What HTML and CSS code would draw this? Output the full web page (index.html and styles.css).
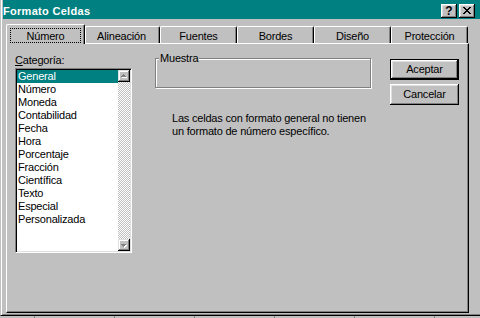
FILE: index.html
```html
<html>
	<head>
		<title>Formato Celdas</title>
		<link rel="stylesheet" href="styles.css">
	</head>

	<body>
		<div class="window">
			<div class="titlebar">
				<span class="title">Formato Celdas</span>
				<div class="caption_btns">
					<span class="cbtn help">?</span>
					<span class="cbtn close">
						<svg width="8" height="7" viewBox="0 0 8 7" shape-rendering="crispEdges">
							<path d="M0 0h2v1H0zM6 0h2v1H6zM1 1h2v1H1zM5 1h2v1H5zM2 2h4v1H2zM3 3h2v1H3zM2 4h4v1H2zM1 5h2v1H1zM5 5h2v1H5zM0 6h2v1H0zM6 6h2v1H6z" fill="#000"/>
						</svg>
					</span>
				</div>
			</div>

			<div class="dialog">
				<div class="tabs">
					<div class="tab active"><span class="focus">Número</span></div>
					<div class="tab">Alineación</div>
					<div class="tab">Fuentes</div>
					<div class="tab">Bordes</div>
					<div class="tab">Diseño</div>
					<div class="tab">Protección</div>
				</div>

				<div class="panel">
					<div class="col_cat">
						<div class="lbl"><u>C</u>ategoría:</div>
						<div class="listbox">
							<ul class="items">
								<li class="sel">General</li>
								<li>Número</li>
								<li>Moneda</li>
								<li>Contabilidad</li>
								<li>Fecha</li>
								<li>Hora</li>
								<li>Porcentaje</li>
								<li>Fracción</li>
								<li>Científica</li>
								<li>Texto</li>
								<li>Especial</li>
								<li>Personalizada</li>
							</ul>
							<div class="vscroll">
								<div class="arrow">
									<svg width="12" height="12" viewBox="0 0 12 12" shape-rendering="crispEdges">
										<path d="M6 5h1v1H6zM5 6h3v1H5zM4 7h5v1H4z" fill="#fff"/>
										<path d="M5 4h1v1H5zM4 5h3v1H4zM3 6h5v1H3z" fill="#808080"/>
									</svg>
								</div>
								<div class="track"></div>
								<div class="arrow">
									<svg width="12" height="12" viewBox="0 0 12 12" shape-rendering="crispEdges">
										<path d="M4 6h5v1H4zM5 7h3v1H5zM6 8h1v1H6z" fill="#fff"/>
										<path d="M3 5h5v1H3zM4 6h3v1H4zM5 7h1v1H5z" fill="#808080"/>
									</svg>
								</div>
							</div>
						</div>
					</div>

					<div class="col_sample">
						<div class="group"><span class="group_lbl">Muestra</span></div>
						<p class="desc">Las celdas con formato general no tienen<br>un formato de número específico.</p>
					</div>

					<div class="col_btns">
						<div class="btn default">Aceptar</div>
						<div class="btn">Cancelar</div>
					</div>
				</div>
			</div>
		</div>
		<div class="sheet_edge"></div>
	</body>
</html>
```

FILE: styles.css
```css
body {
	margin: 0;
	background-color: #C0C0C0;
	font-family: "Liberation Sans", Arial, sans-serif;
	font-size: 11px;
	line-height: 13px;
	letter-spacing: -0.2px;
	color: #000;
}

.window {
	box-sizing: border-box;
	width: 480px;
	height: 316px;
	padding: 0 0 2px 2px;
	border-left: 1px solid #C0C0C0;
	border-bottom: 1px solid #000;
	box-shadow: inset 1px 0 #FFF, inset 0 -1px #808080;
	background-color: #C0C0C0;
	display: flex;
	flex-direction: column;
}

/* barra de titulo */
.titlebar {
	height: 19px;
	flex: 0 0 19px;
	background-color: #008080;
	color: #FFF;
	display: flex;
	justify-content: space-between;
	align-items: flex-start;
	padding-right: 5px;
}

.title {
	margin-top: 5px;
	font-weight: bold;
	letter-spacing: 0.3px;
}

.caption_btns {
	display: flex;
	gap: 2px;
	margin-top: 4px;
}

.cbtn {
	box-sizing: border-box;
	width: 16px;
	height: 14px;
	background-color: #C0C0C0;
	box-shadow: inset -1px -1px #000, inset 1px 1px #FFF, inset -2px -2px #808080, inset 2px 2px #DFDFDF;
	display: flex;
	justify-content: center;
	align-items: center;
	color: #000;
}

.help {
	font-weight: bold;
	font-size: 12px;
	letter-spacing: 0;
	line-height: 12px;
	padding-bottom: 1px;
}

.close svg {
	display: block;
	margin-bottom: 1px;
}

/* pestañas */
.dialog {
	padding: 5px 0 0 3px;
}

.tabs {
	display: flex;
	align-items: flex-end;
	height: 20px;
	margin-bottom: -1px;
	position: relative;
	z-index: 1;
}

.tab {
	box-sizing: border-box;
	width: 77px;
	height: 17px;
	margin-bottom: 1px;
	padding-top: 3px;
	text-align: center;
	border: 1px solid;
	border-bottom: 0;
	border-color: #FFF #000 #000 #FFF;
	border-radius: 2px 2px 0 0;
	box-shadow: inset -1px 0 #808080;
	background-color: #C0C0C0;
	white-space: nowrap;
}

.tab.active {
	width: 79px;
	height: 20px;
	margin-right: -2px;
	margin-bottom: 0;
	padding: 3px 3px 0 3px;
	position: relative;
	z-index: 1;
}

.tab.active + .tab {
	border-left-color: #C0C0C0;
	box-shadow: inset -1px 0 #808080, inset 2px 0 #FFF;
}

.focus {
	display: block;
	border: 1px dotted #000;
	padding-top: 1px;
	line-height: 12px;
}

.panel {
	box-sizing: border-box;
	width: 463px;
	height: 270px;
	padding: 8px 0 0 8px;
	border: 1px solid;
	border-color: #FFF #000 #000 #FFF;
	box-shadow: inset -1px -1px #808080;
	display: flex;
	align-items: flex-start;
}

/* lista de categorias */
.col_cat {
	width: 117px;
}

.lbl {
	margin-top: 2px;
}

.listbox {
	box-sizing: border-box;
	width: 117px;
	height: 185px;
	margin-top: 1px;
	padding: 1px;
	border: 1px solid;
	border-color: #808080 #FFF #FFF #808080;
	box-shadow: inset 1px 1px #000, inset -1px -1px #DFDFDF;
	background-color: #FFF;
	display: flex;
}

.items {
	flex: 1;
	list-style: none;
	margin: 0;
	padding: 0;
}

.items li {
	padding-left: 1px;
	white-space: nowrap;
}

.items li.sel {
	background-color: #008080;
	color: #FFF;
}

.vscroll {
	width: 12px;
	display: flex;
	flex-direction: column;
}

.arrow {
	box-sizing: border-box;
	height: 12px;
	background-color: #C0C0C0;
	box-shadow: inset -1px -1px #000, inset 1px 1px #DFDFDF, inset -2px -2px #808080, inset 2px 2px #FFF;
}

.arrow svg {
	display: block;
}

.track {
	flex: 1;
	background: repeating-conic-gradient(#C0C0C0 0 25%, #FFF 0 50%) 0 0 / 2px 2px;
}

/* muestra */
.col_sample {
	width: 216px;
	margin-left: 23px;
}

.group {
	position: relative;
	box-sizing: border-box;
	height: 30px;
	margin-top: 6px;
	border: 1px solid #808080;
	box-shadow: inset 1px 1px #FFF, 1px 1px #FFF;
}

.group_lbl {
	position: absolute;
	left: 3px;
	top: -7px;
	padding: 0 1px;
	background-color: #C0C0C0;
}

.desc {
	margin: 24px 0 0 17px;
	white-space: nowrap;
}

/* botones */
.col_btns {
	margin-left: 19px;
	padding-top: 7px;
}

.btn {
	box-sizing: border-box;
	width: 69px;
	height: 21px;
	display: flex;
	justify-content: center;
	align-items: center;
	box-shadow: inset -1px -1px #000, inset 1px 1px #FFF, inset -2px -2px #808080, inset 2px 2px #DFDFDF;
}

.btn + .btn {
	margin-top: 4px;
}

.btn.default {
	box-shadow: inset 0 0 0 1px #000, inset -2px -2px #000, inset 2px 2px #FFF, inset -3px -3px #808080, inset 3px 3px #DFDFDF;
}

.sheet_edge {
	height: 2px;
	background: repeating-linear-gradient(to right, transparent 0 34px, #808080 34px 35px, transparent 35px 80px);
}
```
